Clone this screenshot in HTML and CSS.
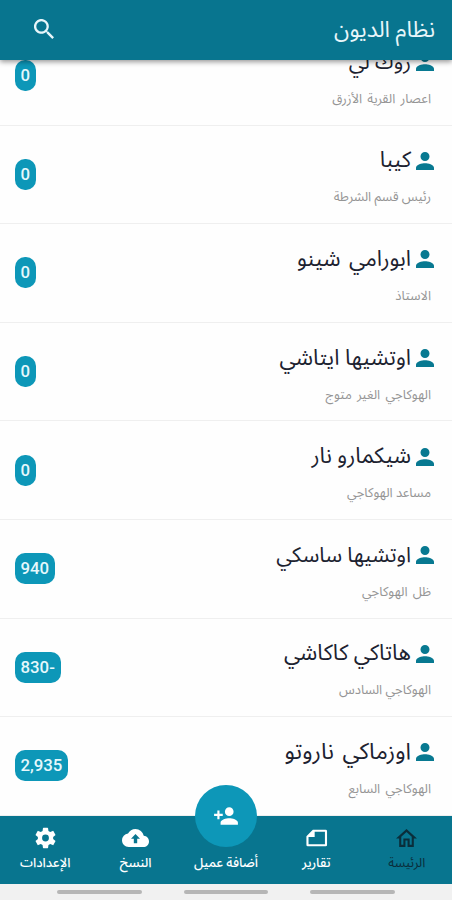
FILE: index.html
```html
<!DOCTYPE html>
<html lang="ar" dir="rtl">
<head>
<meta charset="utf-8">
<title>نظام الديون</title>
<link rel="stylesheet" href="styles.css">
</head>
<body>
<svg class="defs" width="0" height="0"><symbol id="person" viewBox="4 4 16 16"><path d="M12 12a4 4 0 1 0 0-8 4 4 0 0 0 0 8zm0 2c-2.7 0-8 1.3-8 4v2h16v-2c0-2.700-5.300-4-8-4z"/></symbol></svg>
<header class="bar">
  <h1 class="title">نظام الديون</h1>
  <svg class="search" viewBox="3 3 17.500 17.500"><path d="M15.500 14h-.8l-.3-.3A6.500 6.500 0 1 0 13.700 14.400l.3.3v.8l5 5 1.500-1.500zm-6 0a4.500 4.500 0 1 1 0-9 4.500 4.500 0 0 1 0 9z"/></svg>
</header>
<main class="view">
  <ul class="list">
    <li class="row"><div class="who"><div class="name snug"><svg class="person"><use href="#person"/></svg><span>روك لي</span></div><div class="note roomy">اعصار القرية الأزرق</div></div><span class="badge">0</span></li>
    <li class="row"><div class="who"><div class="name"><svg class="person"><use href="#person"/></svg><span>كيبا</span></div><div class="note">رئيس قسم الشرطة</div></div><span class="badge">0</span></li>
    <li class="row"><div class="who"><div class="name roomy"><svg class="person"><use href="#person"/></svg><span>ابورامي شينو</span></div><div class="note">الاستاذ</div></div><span class="badge">0</span></li>
    <li class="row"><div class="who"><div class="name"><svg class="person"><use href="#person"/></svg><span>اوتشيها ايتاشي</span></div><div class="note roomy">الهوكاجي الغير متوج</div></div><span class="badge">0</span></li>
    <li class="row"><div class="who"><div class="name"><svg class="person"><use href="#person"/></svg><span>شيكمارو نار</span></div><div class="note">مساعد الهوكاجي</div></div><span class="badge">0</span></li>
    <li class="row"><div class="who"><div class="name snug"><svg class="person"><use href="#person"/></svg><span>اوتشيها ساسكي</span></div><div class="note roomy">ظل الهوكاجي</div></div><span class="badge">940</span></li>
    <li class="row"><div class="who"><div class="name"><svg class="person"><use href="#person"/></svg><span>هاتاكي كاكاشي</span></div><div class="note">الهوكاجي السادس</div></div><span class="badge">-830</span></li>
    <li class="row"><div class="who"><div class="name wide"><svg class="person"><use href="#person"/></svg><span>اوزماكي ناروتو</span></div><div class="note roomy">الهوكاجي السابع</div></div><span class="badge">2,935</span></li>
  </ul>
</main>
<nav class="tabs">
  <a class="tab active"><svg class="icon" viewBox="1 1 22 21"><path d="M12 5.700l5 4.500V18h-2v-6H9v6H7v-7.800l5-4.500M12 3L2 12h3v8h6v-6h2v6h6v-8h3z"/></svg><span>الرئيسة</span></a>
  <a class="tab"><svg class="icon" viewBox="0 0 24 24"><path fill-rule="evenodd" d="M8 3h14a1.500 1.500 0 0 1 1.500 1.500v15A1.500 1.500 0 0 1 22 21H2.500A1.500 1.500 0 0 1 1 19.500V10zM10 5.300V11H3.300v7.700h17.900V5.300z"/></svg><span>تقارير</span></a>
  <a class="tab add"><span class="fab"><svg viewBox="0 0 24 24"><path d="M15 12a4 4 0 1 0 0-8 4 4 0 0 0 0 8zm-9-2V7H4v3H1v2h3v3h2v-3h3v-2zm9 4c-2.700 0-8 1.300-8 4v2h16v-2c0-2.700-5.300-4-8-4z"/></svg></span><span>أضافة عميل</span></a>
  <a class="tab"><svg class="icon cloud" viewBox="0 3.500 24 17"><path fill-rule="evenodd" d="M19.350 10.040A7.490 7.490 0 0 0 12 4C9.110 4 6.600 5.640 5.350 8.040A5.990 5.990 0 0 0 0 14c0 3.310 2.690 6 6 6h13c2.760 0 5-2.240 5-5 0-2.640-2.050-4.780-4.650-4.960zM13.500 12.700v4h-3v-4H8l4-4.200 4 4.200z"/></svg><span>النسخ</span></a>
  <a class="tab"><svg class="icon" viewBox="1.700 1.700 20.600 20.600"><path fill-rule="evenodd" d="M19.140 12.940c.04-.3.060-.61.060-.94s-.02-.64-.07-.94l2.030-1.580a.49.49 0 0 0 .12-.61l-1.920-3.320a.49.49 0 0 0-.59-.22l-2.390.96a7 7 0 0 0-1.620-.94l-.36-2.540A.48.48 0 0 0 13.920 2.400h-3.840a.48.48 0 0 0-.47.410l-.36 2.540c-.59.24-1.130.57-1.620.94l-2.390-.96a.49.49 0 0 0-.59.220L2.740 8.870a.48.48 0 0 0 .12.610l2.030 1.580a6.500 6.500 0 0 0 0 1.880l-2.030 1.580a.49.49 0 0 0-.12.610l1.920 3.320c.12.220.37.290.59.220l2.390-.96c.5.380 1.030.7 1.620.94l.36 2.540c.05.240.24.410.48.410h3.840c.24 0 .44-.17.470-.41l.36-2.540a7 7 0 0 0 1.620-.94l2.390.96c.22.080.47 0 .59-.22l1.920-3.320a.48.48 0 0 0-.12-.61zM12 15.200a3.200 3.200 0 1 1 0-6.400 3.200 3.200 0 0 1 0 6.400z"/></svg><span>الإعدادات</span></a>
</nav>
<footer class="system"><i></i><i></i><i></i></footer>
</body>
</html>
```
FILE: styles.css
```css
* { box-sizing: border-box; }
body {
  margin: 0;
  width: 452px;
  height: 900px;
  overflow: hidden;
  display: flex;
  flex-direction: column;
  background: #fefefe;
  font-family: Roboto, "Noto Sans Arabic", "DejaVu Sans", sans-serif;
}
svg { fill: currentColor; display: block; flex: none; }
.defs { position: absolute; }
.bar {
  flex: none;
  height: 60px;
  padding: 0 17px 0 34px;
  display: flex;
  align-items: center;
  justify-content: space-between;
  background: #08758f;
  color: #e8f6fa;
  box-shadow: 0 2px 5px rgba(0, 0, 0, .4);
  z-index: 1;
}
.title { margin: 0 0 2px; font-size: 22.500px; font-weight: 400; line-height: 40px; white-space: nowrap; }
.search { width: 20px; height: 20px; margin-bottom: 2px; }
.view { flex: none; height: 755.500px; overflow: hidden; }
.list { margin: -33px 0 0; padding: 0; list-style: none; }
.row {
  height: 98.600px;
  padding: 0 18px 0 14.500px;
  display: flex;
  align-items: center;
  justify-content: space-between;
  border-bottom: 1.500px solid #efefef;
}
.who { display: flex; flex-direction: column; gap: 7px; padding-top: 5px; }
.name { display: flex; align-items: center; gap: 5px; height: 34px; font-size: 22px; line-height: 34px; color: #1c2230; white-space: nowrap; }
.name.roomy { word-spacing: 3px; }
.name.wide { font-size: 23px; word-spacing: 3px; }
.name.snug { font-size: 21.200px; }
.person { width: 18px; height: 18px; margin-top: 1px; color: #087991; }
.note { padding-right: 3px; height: 26px; font-size: 13px; line-height: 26px; color: #959595; white-space: nowrap; }
.note.roomy { word-spacing: 2px; }
.badge {
  height: 31px;
  padding: 0 6px;
  border-radius: 10px;
  background: #0d97b8;
  color: #e6f8fc;
  font-size: 16.800px;
  font-weight: 500;
  line-height: 31px;
}
.tabs {
  flex: none;
  height: 68.500px;
  display: grid;
  grid-template-columns: repeat(5, 1fr);
  background: #08758f;
  color: #fff;
}
.tab {
  display: flex;
  flex-direction: column;
  align-items: center;
  padding-top: 11px;
  gap: 2px;
  font-size: 13px;
  font-weight: 500;
  line-height: 24px;
  white-space: nowrap;
}
.active { color: #0a2e3b; font-weight: 400; }
.icon { width: 23px; height: 22px; }
.cloud { width: 27px; }
.add { position: relative; padding-top: 35px; }
.fab {
  position: absolute;
  top: -31px;
  left: 50%;
  width: 62px;
  height: 62px;
  margin-left: -31px;
  border-radius: 50%;
  background: #0d97b8;
  display: grid;
  place-items: center;
}
.fab svg { width: 26px; height: 26px; }
.system {
  flex: 1;
  display: flex;
  justify-content: center;
  gap: 42px;
  padding-top: 6px;
  background: #f1f1f1;
}
.system i { width: 84.500px; height: 4px; border-radius: 2px; background: #b6b6b6; }
```
